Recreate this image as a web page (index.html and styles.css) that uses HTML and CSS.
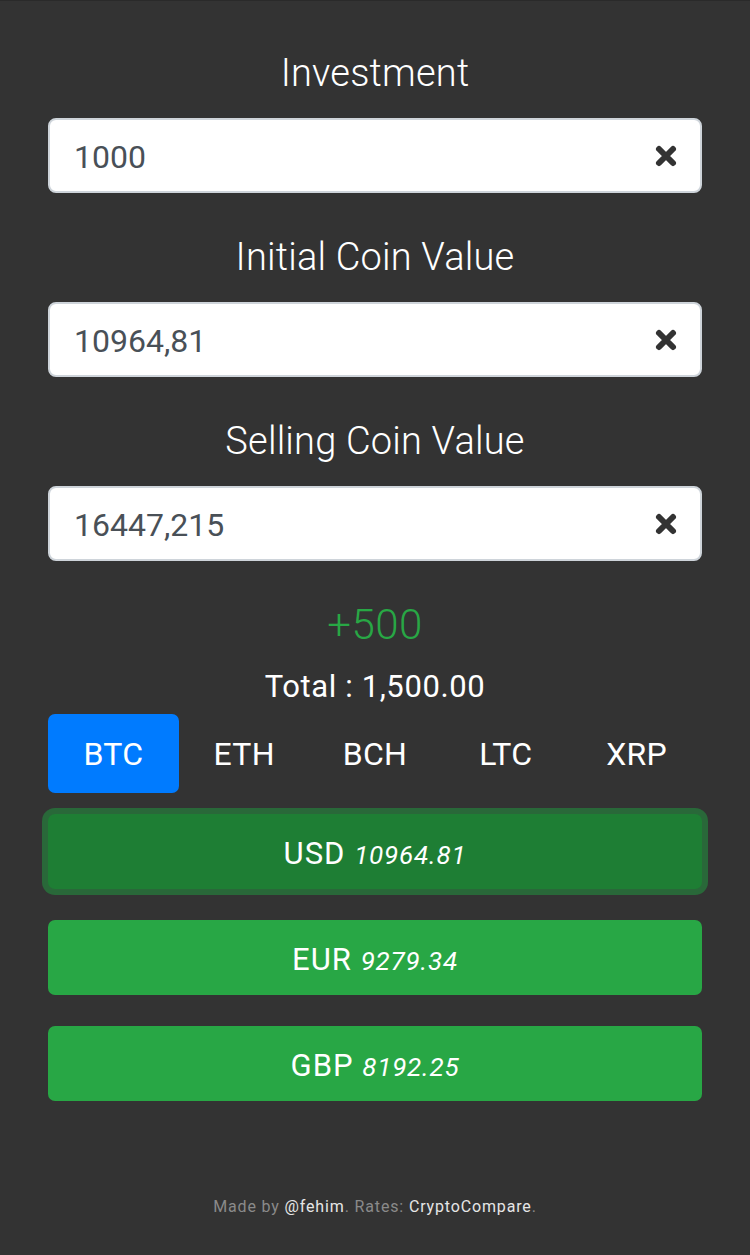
FILE: index.html
```html
<!DOCTYPE html>
<html lang="en">
<head>
<meta charset="utf-8">
<title>Crypto Calculator</title>
<link rel="stylesheet" href="styles.css">
</head>
<body>
<main class="app">
  <section class="group">
    <label class="label" for="inv">Investment</label>
    <div class="field">
      <input id="inv" class="input" type="text" value="1000">
      <span class="clear"><svg viewBox="0 0 24 24" width="24" height="24"><path d="M5 5 L19 19 M19 5 L5 19" stroke="#333" stroke-width="6" stroke-linecap="round"/></svg></span>
    </div>
  </section>
  <section class="group">
    <label class="label" for="icv">Initial Coin Value</label>
    <div class="field">
      <input id="icv" class="input" type="text" value="10964,81">
      <span class="clear"><svg viewBox="0 0 24 24" width="24" height="24"><path d="M5 5 L19 19 M19 5 L5 19" stroke="#333" stroke-width="6" stroke-linecap="round"/></svg></span>
    </div>
  </section>
  <section class="group">
    <label class="label" for="scv">Selling Coin Value</label>
    <div class="field">
      <input id="scv" class="input" type="text" value="16447,215">
      <span class="clear"><svg viewBox="0 0 24 24" width="24" height="24"><path d="M5 5 L19 19 M19 5 L5 19" stroke="#333" stroke-width="6" stroke-linecap="round"/></svg></span>
    </div>
  </section>

  <div class="profit">+500</div>
  <div class="total">Total : 1,500.00</div>

  <nav class="tabs">
    <span class="tab active">BTC</span>
    <span class="tab">ETH</span>
    <span class="tab">BCH</span>
    <span class="tab">LTC</span>
    <span class="tab">XRP</span>
  </nav>

  <div class="rates">
    <button class="rate selected">USD <i>10964.81</i></button>
    <button class="rate">EUR <i>9279.34</i></button>
    <button class="rate">GBP <i>8192.25</i></button>
  </div>

  <footer class="footer">Made by <a href="#">@fehim</a>. Rates: <a href="#">CryptoCompare</a>.</footer>
</main>
</body>
</html>
```
FILE: styles.css
```css
html, body {
  margin: 0;
  padding: 0;
  background: #333333;
}
body {
  border-top: 1px solid #2a2a2a;
  font-family: Roboto, "Liberation Sans", Arial, sans-serif;
  color: #ffffff;
}
.app {
  padding: 49px 48px 0;
  display: flex;
  flex-direction: column;
}
.group {
  display: flex;
  flex-direction: column;
  margin-bottom: 41px;
}
.group:last-of-type {
  margin-bottom: 40px;
}
.label {
  text-align: center;
  font-size: 38px;
  font-weight: 300;
  line-height: 46px;
  margin-bottom: 22px;
  letter-spacing: 0.2px;
}
.field {
  position: relative;
}
.input {
  box-sizing: border-box;
  width: 100%;
  height: 75px;
  border: 2px solid #ced4da;
  border-radius: 8px;
  background: #fff;
  padding: 2px 70px 0 24px;
  font-family: Roboto, "Liberation Sans", Arial, sans-serif;
  font-size: 32px;
  color: #495057;
  outline: none;
}
.clear {
  position: absolute;
  right: 24px;
  top: 50%;
  transform: translateY(-50%);
  width: 24px;
  height: 24px;
  display: flex;
}
.profit {
  text-align: center;
  color: #28a745;
  font-size: 42px;
  font-weight: 300;
  line-height: 48px;
  letter-spacing: 0.5px;
}
.total {
  text-align: center;
  font-size: 31px;
  line-height: 36px;
  margin-top: 20px;
  letter-spacing: 0.6px;
}
.tabs {
  display: grid;
  grid-template-columns: repeat(5, 1fr);
  margin-top: 9px;
}
.tab {
  height: 79px;
  display: flex;
  align-items: center;
  justify-content: center;
  font-size: 32px;
  border-radius: 7px;
  letter-spacing: 0.3px;
}
.tab.active {
  background: #007bff;
}
.rates {
  display: flex;
  flex-direction: column;
  gap: 31px;
  margin-top: 21px;
}
.rate {
  height: 75px;
  border: 0;
  border-radius: 7px;
  background: #28a745;
  color: #fff;
  padding: 3px 0 0;
  font-family: Roboto, "Liberation Sans", Arial, sans-serif;
  font-size: 31px;
  font-weight: 400;
  letter-spacing: 1px;
}
.rate i {
  font-size: 26px;
  letter-spacing: 0.8px;
}
.rate.selected {
  background: #1e7e34;
  box-shadow: 0 0 0 6px rgba(40, 110, 58, 0.9);
}
.footer {
  text-align: center;
  color: #8a8a8a;
  font-size: 16px;
  margin-top: 96px;
  letter-spacing: 0.85px;
}
.footer a {
  color: #e6e6e6;
  text-decoration: none;
}
```
